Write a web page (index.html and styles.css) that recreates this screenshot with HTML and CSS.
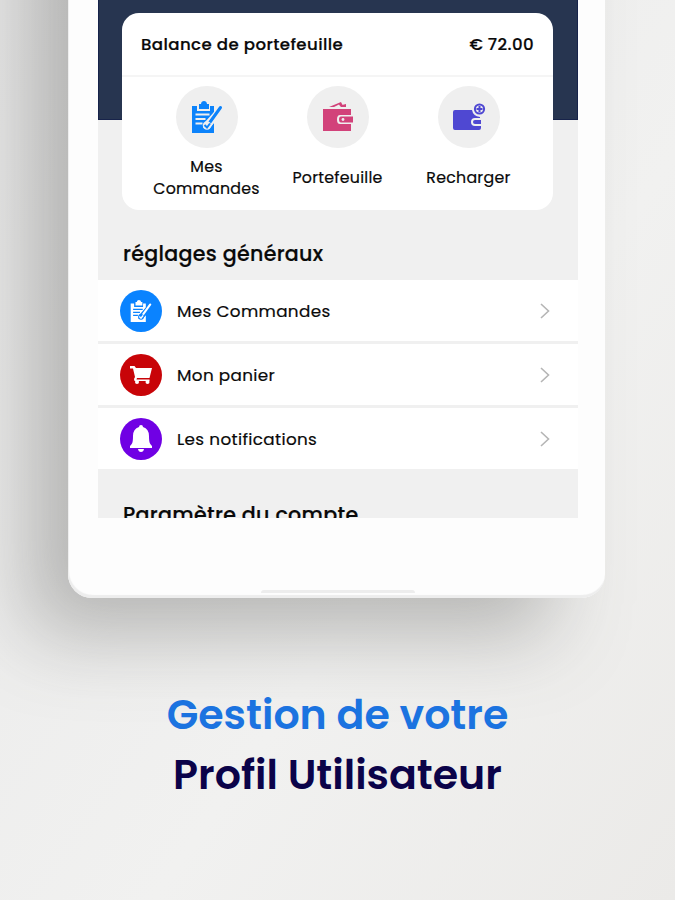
FILE: index.html
```
<!DOCTYPE html>
<html lang="fr">
<head>
    <meta charset="utf-8">
    <title>Profil Utilisateur</title>
    <link rel="stylesheet" href="styles.css">
</head>
<body>
    <!-- shared icon shapes -->
    <svg class="defs" width="0" height="0">
        <symbol id="clipboard" viewBox="0 0 32 34">
            <path fill="currentColor" d="M1 6h5v5h13V6h4v6L14 22l-2 6 5 1 6-6v10H1z"/>
            <path fill="currentColor" d="M8 9V4h2c0-4 6-4 6 0h2v5z"/>
            <path class="lines" d="M4.500 14.500h14M4.500 19h10M4.500 23.500h7"/>
            <path class="halo" d="M30 7.500L17 26"/>
            <path stroke="currentColor" stroke-width="3" stroke-linecap="round" d="M29.500 7.500L18 23.500"/>
            <circle class="halo-fill" cx="16" cy="25.500" r="4.200"/>
            <path stroke="currentColor" stroke-width="2" d="M13.500 25l2.500 2.500 3-4"/>
        </symbol>
    </svg>

    <div class="phone">
        <div class="screen">
            <div class="banner"></div>

            <div class="card">
                <div class="balance">
                    <span>Balance de portefeuille</span>
                    <span>€ 72.00</span>
                </div>
                <div class="actions">
                    <div class="action">
                        <div class="circle orders"><svg width="32" height="34"><use href="#clipboard"/></svg></div>
                        <div class="label">Mes<br>Commandes</div>
                    </div>
                    <div class="action">
                        <div class="circle wallet">
                            <svg width="32" height="32" viewBox="0 0 32 32">
                                <path fill="currentColor" d="M7 6l12-5 2 4h-3l-1-1.500L12 6zM20 4l4-1v3h-6z"/>
                                <path fill="currentColor" d="M1 8h28v6H18q-3 0-3 4.500t3 4.500h11v7H1z"/>
                                <path fill="currentColor" d="M19 15.500h12v6H19q-2 0-2-3t2-3z"/>
                                <circle cx="21" cy="18.500" r="1.400" fill="#efefef"/>
                            </svg>
                        </div>
                        <div class="label">Portefeuille</div>
                    </div>
                    <div class="action">
                        <div class="circle topup">
                            <svg width="34" height="30" viewBox="0 0 34 30">
                                <path fill="currentColor" d="M3 8h17q1 6 8 7v1h-5q-4 0-4 4t4 4h6v2q0 2-2 2H3q-2 0-2-2V10q0-2 2-2z"/>
                                <path fill="currentColor" d="M23 18h6v4h-6q-2 0-2-2t2-2z"/>
                                <circle cx="27.500" cy="7" r="4.600" stroke="currentColor" stroke-width="2"/>
                                <path stroke="currentColor" stroke-width="2" d="M27.500 4v6M24.500 7h6"/>
                            </svg>
                        </div>
                        <div class="label">Recharger</div>
                    </div>
                </div>
            </div>

            <h2>réglages généraux</h2>
            <div class="list">
                <div class="row">
                    <div class="badge blue"><svg width="22" height="24"><use href="#clipboard"/></svg></div>
                    <span>Mes Commandes</span>
                    <svg class="chevron" width="10" height="16" viewBox="0 0 10 16"><path d="M1 1l7.500 7L1 15"/></svg>
                </div>
                <div class="row">
                    <div class="badge red">
                        <svg width="22" height="20" viewBox="0 0 22 20">
                            <path fill="#fff" d="M0 1h4.500l1.500 2h16l-2.500 10H7l-.5 1.500h13V16H4.500l-.5-2 1-2L3 3.500H0z"/>
                            <circle cx="7" cy="17" r="2" fill="#fff"/>
                            <circle cx="17.500" cy="17" r="2" fill="#fff"/>
                        </svg>
                    </div>
                    <span>Mon panier</span>
                    <svg class="chevron" width="10" height="16" viewBox="0 0 10 16"><path d="M1 1l7.500 7L1 15"/></svg>
                </div>
                <div class="row">
                    <div class="badge purple">
                        <svg width="24" height="28" viewBox="0 0 24 28">
                            <path fill="#fff" d="M12 0q2 0 2 2 6 2 6 9c0 7 1 8 3 10v2H1v-2c2-2 3-3 3-10q0-7 6-9 0-2 2-2zM9 24h6q-.5 3-3 3t-3-3z"/>
                        </svg>
                    </div>
                    <span>Les notifications</span>
                    <svg class="chevron" width="10" height="16" viewBox="0 0 10 16"><path d="M1 1l7.500 7L1 15"/></svg>
                </div>
            </div>
            <h2 class="account">Paramètre du compte</h2>
        </div>
        <div class="home-bar"></div>
    </div>

    <h1><span class="line-one">Gestion de votre</span><span class="line-two">Profil Utilisateur</span></h1>
</body>
</html>
```
FILE: styles.css
```
* {box-sizing: border-box;}
body {margin: 0;height: 900px;overflow: hidden;font-family: Poppins, Inter, sans-serif;color: #090909;background: linear-gradient(125deg, #e9e9e9 0%, #f1f1f0 60%, #ebeae8 100%);}
svg {display: block;fill: none;}
.defs {position: absolute;}

/* Phone, its top runs off the page */
.phone {display: flex;flex-direction: column;justify-content: space-between;width: 537px;height: 758px;margin: -160px 0 0 68px;padding: 160px 27px 5px 30px;background: #fdfdfd;border-radius: 0 0 24px 24px;box-shadow: inset 1px -3px 1px #ededed, -48px 44px 80px -8px rgba(80,80,77,0.36);}
.screen {width: 480px;height: 518px;overflow: hidden;background: #f0f0f0;}
.banner {height: 120px;background: #273550;border: 1px solid #17234a;border-top: 0;}
.home-bar {width: 154px;height: 3px;margin-left: 163px;background: #ededed;border-radius: 3px 3px 0 0;}

/* Wallet card */
.card {position: relative;width: 431px;height: 197px;margin: -107px 0 0 24px;background: #fff;border-radius: 17px;}
.balance {display: flex;justify-content: space-between;align-items: center;height: 64px;padding: 0 19px;border-bottom: 2px solid #f5f5f5;font-size: 16.6px;font-weight: 500;letter-spacing: 0.4px;-webkit-text-stroke: 0.2px;}
.actions {display: flex;justify-content: center;padding-top: 9px;}
.action {width: 131px;}
.circle {display: flex;align-items: center;justify-content: center;width: 62px;height: 62px;margin: 0 auto;border-radius: 50%;background: #efefef;}
.label {display: flex;align-items: center;justify-content: center;height: 44px;margin-top: 8px;text-align: center;font-size: 15.8px;line-height: 22px;letter-spacing: 0.25px;-webkit-text-stroke: 0.2px;}
.orders {color: #0c83fb;}
.wallet {color: #d2427a;}
.topup {color: #4f48d2;}
.lines {stroke: #efefef;stroke-width: 1.8;}
.halo {stroke: #efefef;stroke-width: 6;}
.halo-fill {fill: #efefef;}

/* Settings list */
h2 {height: 70px;margin: 0;padding-left: 25px;font-size: 20.6px;line-height: 87px;font-weight: 500;letter-spacing: 0.3px;-webkit-text-stroke: 0.2px;}
.account {line-height: 85px;}
.row {display: flex;align-items: center;height: 61px;margin-bottom: 3px;padding: 0 28px 0 22px;background: #fff;font-size: 16.8px;letter-spacing: 0.35px;-webkit-text-stroke: 0.2px;}
.badge {display: flex;align-items: center;justify-content: center;width: 42px;height: 42px;margin-right: 15px;border-radius: 50%;color: #fff;}
.blue {background: #0a83ff;}
.red {background: #c80408;}
.purple {background: #7000e4;}
.chevron {margin-left: auto;stroke: #b5b5b5;stroke-width: 1.6;}
/* the clipboard's gaps take the colour of the circle behind it */
.blue svg {--gap: #0a83ff;}
.lines, .halo {stroke: var(--gap, #efefef);}
.halo-fill {fill: var(--gap, #efefef);}

/* Caption */
h1 {margin: 87px 0 0;text-align: center;font-size: 41.1px;line-height: 60px;font-weight: 600;}
h1 span {display: block;}
.line-one {color: #1b73e0;}
.line-two {color: #0b0349;}
```
